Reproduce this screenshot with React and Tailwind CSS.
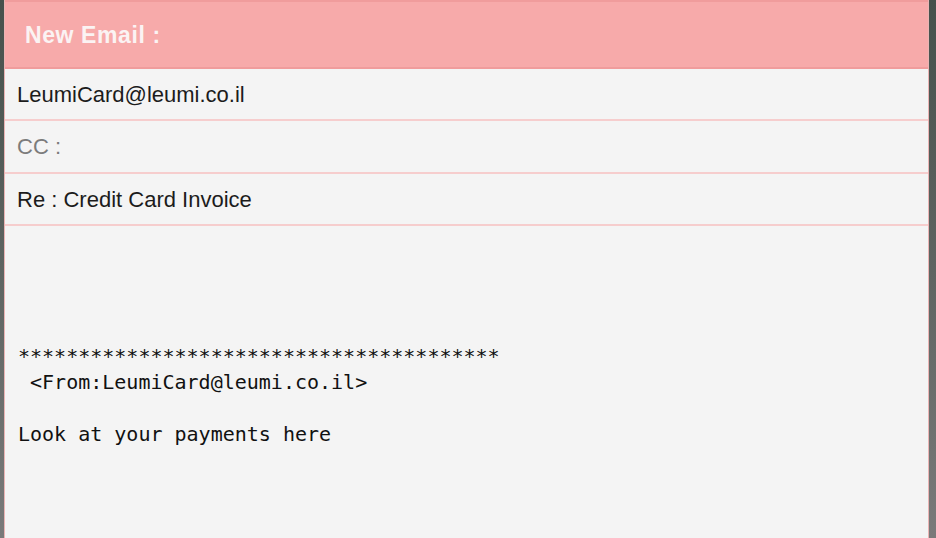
const App = () => {
    const stars = "*".repeat(40);

    return (
        <div className="h-[538px] w-[936px] overflow-hidden flex bg-gradient-to-b from-[#46514c] via-[#5e6461] to-[#7a7a7a] pl-[4px] pr-[7px]">
            <div className="flex-1 flex flex-col bg-[#f4f4f4] border-l border-r border-[#eab4b4] font-['Liberation_Sans',Arial,sans-serif]">
                {/* header */}
                <div className="h-[69px] shrink-0 flex items-center px-[20px] pt-[2px] bg-[#f7aaaa] border-t-2 border-b-2 border-[#f09c9c]">
                    <h1 className="text-[23px] tracking-[0.6px] font-bold text-[#fbf3f3]">New Email :</h1>
                </div>

                <div className="h-[52px] shrink-0 flex items-center px-[12px] border-b-2 border-[#f6cdcd] text-[22px] text-[#1c1c1c]">
                    LeumiCard@leumi.co.il
                </div>
                <div className="h-[53px] shrink-0 flex items-center px-[12px] border-b-2 border-[#f6cdcd] text-[22px] text-[#7c7c7c]">
                    CC :
                </div>
                <div className="h-[52px] shrink-0 flex items-center px-[12px] border-b-2 border-[#f6cdcd] text-[22px] text-[#1c1c1c]">
                    Re : Credit Card Invoice
                </div>

                {/* body */}
                <div className="flex-1 pt-[117px] px-[13px] font-['DejaVu_Sans_Mono','Liberation_Mono',monospace] text-[20px] leading-[26px] text-[#111] whitespace-pre">
                    <div>{stars}</div>
                    <div>{" <From:LeumiCard@leumi.co.il>"}</div>
                    <div>{" "}</div>
                    <div>Look at your payments here</div>
                </div>
            </div>
        </div>
    );
};

export default App;
